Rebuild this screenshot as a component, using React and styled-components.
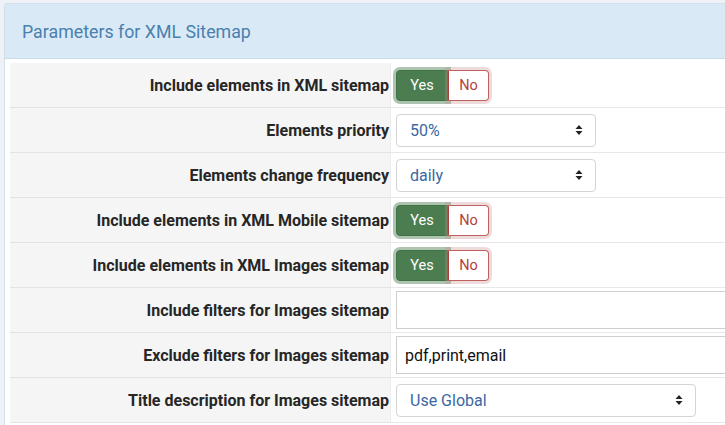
import React from 'react'
import styled, { createGlobalStyle } from 'styled-components'

const Global = createGlobalStyle`
  html, body {
    margin: 0;
    background: #eef1f5;
    font-family: Roboto, "Liberation Sans", sans-serif;
  }
`

const Page = styled.div`
  padding: 3px 0 0 4px;
  width: 725px;
  height: 425px;
  box-sizing: border-box;
  overflow: hidden;
`

const Panel = styled.section`
  background: #fff;
  border: 1px solid #cfe0ea;
  border-right: none;
  border-radius: 3px 0 0 0;
  min-height: 430px;
`

const PanelHeading = styled.header`
  background: #d9eaf6;
  border-bottom: 1px solid #c9dce9;
  height: 54px;
  display: flex;
  align-items: center;
  padding-left: 17px;
  font-size: 17.8px;
  color: #4a7fae;
`

const Body = styled.div`
  padding: 4px 0 0 5px;
`

const Table = styled.div`
  display: grid;
  grid-template-columns: 381px 1fr;
`

const Label = styled.div`
  background: #f5f5f5;
  border-bottom: 1px solid #e3e3e3;
  border-right: 1px solid #ececec;
  height: 44px;
  display: flex;
  align-items: center;
  justify-content: flex-end;
  padding-right: 1px;
  font-weight: 700;
  font-size: 16px;
  color: #262626;
  white-space: nowrap;
`

const Value = styled.div`
  border-bottom: 1px solid #e8e8e8;
  height: 44px;
  display: flex;
  align-items: center;
  padding-left: 5px;
  overflow: hidden;
`

const ToggleGroup = styled.div`
  display: flex;
  margin-top: 1px;
`

const YesButton = styled.button`
  width: 52px;
  height: 31px;
  border: 1px solid #3f7245;
  border-radius: 4px 0 0 4px;
  background: #4b7d51;
  color: #fff;
  font: 400 14.5px Roboto, "Liberation Sans", sans-serif;
  padding: 0;
  box-shadow: 0 0 0 3px rgba(75, 125, 81, 0.45);
`

const NoButton = styled.button`
  width: 41px;
  height: 31px;
  border: 1px solid #c0605e;
  border-left: 1px solid #a9423f;
  border-radius: 0 4px 4px 0;
  background: #fff;
  color: #b3403d;
  font: 400 14.5px Roboto, "Liberation Sans", sans-serif;
  padding: 0;
  box-shadow: 0 0 0 3px rgba(200, 140, 140, 0.3);
`

const SelectBox = styled.div`
  width: ${p => p.width}px;
  height: 33px;
  box-sizing: border-box;
  border: 1px solid #d4d4d4;
  border-radius: 4px;
  display: flex;
  align-items: center;
  justify-content: space-between;
  padding: 0 12px 0 13px;
  color: #3b67a3;
  font-size: 16px;
`

const TextInput = styled.div`
  width: 340px;
  height: 38px;
  box-sizing: border-box;
  border: 1px solid #cfcfcf;
  border-right: none;
  display: flex;
  align-items: center;
  padding-left: 8px;
  color: #111;
  font-size: 16px;
  flex-shrink: 0;
`

const Caret = () => (
  <svg width="8" height="12" viewBox="0 0 8 12">
    <path d="M4 1 L7.5 5 H0.5 Z M4 11 L7.5 7 H0.5 Z" fill="#222" />
  </svg>
)

const Toggle = () => (
  <ToggleGroup>
    <YesButton>Yes</YesButton>
    <NoButton>No</NoButton>
  </ToggleGroup>
)

const rows = [
  ['Include elements in XML sitemap', <Toggle />],
  ['Elements priority', <SelectBox width={200}>50%<Caret /></SelectBox>],
  ['Elements change frequency', <SelectBox width={200}>daily<Caret /></SelectBox>],
  ['Include elements in XML Mobile sitemap', <Toggle />],
  ['Include elements in XML Images sitemap', <Toggle />],
  ['Include filters for Images sitemap', <TextInput />],
  ['Exclude filters for Images sitemap', <TextInput>pdf,print,email</TextInput>],
  ['Title description for Images sitemap', <SelectBox width={300}>Use Global<Caret /></SelectBox>],
]

export default function App() {
  return (
    <Page>
      <Global />
      <Panel>
        <PanelHeading>Parameters for XML Sitemap</PanelHeading>
        <Body>
          <Table>
            {rows.map(([label, control]) => (
              <React.Fragment key={label}>
                <Label>{label}</Label>
                <Value>{control}</Value>
              </React.Fragment>
            ))}
          </Table>
        </Body>
      </Panel>
    </Page>
  )
}
